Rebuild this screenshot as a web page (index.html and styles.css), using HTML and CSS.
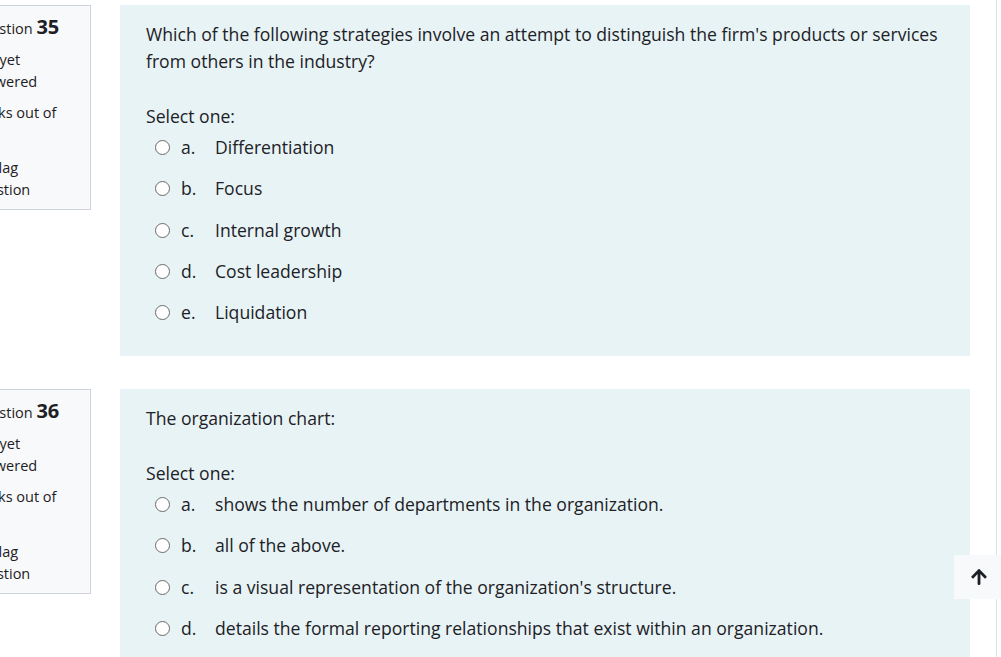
FILE: index.html
```html
<!DOCTYPE html>
<html>
<head>
<meta charset="utf-8">
<link rel="stylesheet" href="styles.css">
</head>
<body>
<div class="page">
  <div class="que">
    <div class="info">
      <h3 class="no">Question <span class="qno">35</span></h3>
      <div class="state">Not yet answered</div>
      <div class="grade">Marks out of 1.00</div>
      <div class="flag"><svg class="flagicon" width="16" height="16" viewBox="0 0 16 16"><path d="M3 2v13M3 2.5h9l-2 3 2 3H3" fill="none" stroke="#6a737b" stroke-width="1.3"/></svg>Flag question</div>
    </div>
    <div class="content">
      <div class="qtext">Which of the following strategies involve an attempt to distinguish the firm's products or services from others in the industry?</div>
      <div class="prompt">Select one:</div>
      <div class="answers">
        <div class="ans"><span class="radio"></span><span class="letter">a.</span><span class="atext">Differentiation</span></div>
        <div class="ans"><span class="radio"></span><span class="letter">b.</span><span class="atext">Focus</span></div>
        <div class="ans"><span class="radio"></span><span class="letter">c.</span><span class="atext">Internal growth</span></div>
        <div class="ans"><span class="radio"></span><span class="letter">d.</span><span class="atext">Cost leadership</span></div>
        <div class="ans"><span class="radio"></span><span class="letter">e.</span><span class="atext">Liquidation</span></div>
      </div>
    </div>
  </div>
  <div class="que">
    <div class="info">
      <h3 class="no">Question <span class="qno">36</span></h3>
      <div class="state">Not yet answered</div>
      <div class="grade">Marks out of 1.00</div>
      <div class="flag"><svg class="flagicon" width="16" height="16" viewBox="0 0 16 16"><path d="M3 2v13M3 2.5h9l-2 3 2 3H3" fill="none" stroke="#6a737b" stroke-width="1.3"/></svg>Flag question</div>
    </div>
    <div class="content">
      <div class="qtext">The organization chart:</div>
      <div class="prompt">Select one:</div>
      <div class="answers">
        <div class="ans"><span class="radio"></span><span class="letter">a.</span><span class="atext">shows the number of departments in the organization.</span></div>
        <div class="ans"><span class="radio"></span><span class="letter">b.</span><span class="atext">all of the above.</span></div>
        <div class="ans"><span class="radio"></span><span class="letter">c.</span><span class="atext">is a visual representation of the organization's structure.</span></div>
        <div class="ans"><span class="radio"></span><span class="letter">d.</span><span class="atext">details the formal reporting relationships that exist within an organization.</span></div>
      </div>
    </div>
  </div>
</div>
<a class="totop" href="#"><svg width="16" height="18" viewBox="0 0 448 512"><path fill="#1d2125" d="M34.9 289.5l-22.2-22.2c-9.4-9.4-9.4-24.6 0-33.9L207 39c9.4-9.4 24.6-9.4 33.9 0l194.3 194.3c9.4 9.4 9.4 24.6 0 33.9L413 289.4c-9.5 9.5-25 9.3-34.3-.4L264 168.6V456c0 13.3-10.7 24-24 24h-32c-13.3 0-24-10.7-24-24V168.6L69.2 289.1c-9.3 9.8-24.8 10-34.3.4z"/></svg></a>
</body>
</html>
```

FILE: styles.css
```css
html, body {
  margin: 0;
  padding: 0;
  background: #fff;
  overflow: hidden;
}
body {
  font-family: "Open Sans", "Noto Sans", sans-serif;
  color: #1d2125;
  width: 1001px;
  height: 657px;
  position: relative;
}
.page {
  margin-left: -34px;
  width: 1030px;
  height: 657px;
  border-right: 1px solid #dee2e6;
  padding-top: 5px;
  display: flex;
  flex-direction: column;
  gap: 33px;
}
.que {
  display: flex;
  gap: 29px;
  align-items: flex-start;
}
.info {
  width: 125px;
  box-sizing: border-box;
  flex: none;
  background: #f8f9fa;
  border: 1px solid #ced4da;
  padding: 7px 12px 9px 4px;
  font-size: 14.5px;
  line-height: 21.5px;
}
.no {
  margin: 0 0 6px 0;
  font-size: 14.5px;
  font-weight: 400;
  line-height: 28px;
}
.qno {
  font-size: 20px;
  font-weight: 700;
}
.state { margin-bottom: 10px; }
.grade { margin-bottom: 12px; }
.flagicon {
  vertical-align: -3px;
  margin-right: 4px;
}
.content {
  width: 850px;
  box-sizing: border-box;
  background: #e7f3f5;
  padding: 16px 25px 30px 26px;
}
.qtext {
  font-size: 17.6px;
  line-height: 27px;
}
.prompt {
  font-size: 17.6px;
  line-height: 27px;
  margin-top: 28px;
}
.answers {
  display: flex;
  flex-direction: column;
  gap: 14.3px;
  margin-top: 4px;
}
.ans {
  display: flex;
  align-items: center;
  font-size: 17.6px;
  line-height: 27px;
}
.radio {
  width: 13px;
  height: 13px;
  border: 1.5px solid #6a6a6a;
  border-radius: 50%;
  background: #fff;
  margin-left: 9px;
  margin-right: 11px;
  flex: none;
}
.letter {
  width: 34px;
  flex: none;
}
.totop {
  position: absolute;
  left: 954px;
  top: 555px;
  width: 47px;
  height: 44px;
  background: #f8f9fa;
  display: flex;
  align-items: center;
  justify-content: center;
  padding-left: 2px;
  box-sizing: border-box;
}
```
